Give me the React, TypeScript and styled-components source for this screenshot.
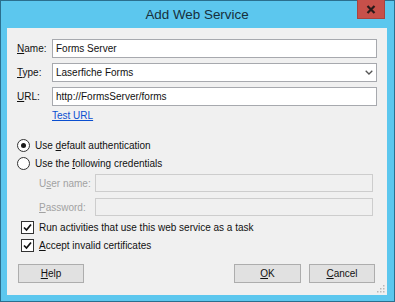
import React from "react";
import styled, { createGlobalStyle } from "styled-components";

const GlobalStyle = createGlobalStyle`
  html, body { margin: 0; padding: 0; background: #5cc7ee; }
  body { font-family: "Liberation Sans", Arial, sans-serif; }
  * { box-sizing: border-box; }
`;

const Window = styled.div`
  width: 395px;
  height: 302px;
  border: 1px solid #2b6f8e;
  background: #5cc7ee;
  display: flex;
  flex-direction: column;
  padding: 0 7px 6px 6px;
`;

const TitleBar = styled.div`
  height: 27px;
  display: grid;
  grid-template-columns: 1fr auto 1fr;
  align-items: start;
`;

const Title = styled.div`
  grid-column: 2;
  font-size: 13.4px;
  line-height: 16px;
  margin-top: 6px;
  color: #17303c;
  white-space: nowrap;
`;

const CloseButton = styled.div`
  grid-column: 3;
  justify-self: end;
  width: 28px;
  height: 19px;
  margin-top: -1px;
  margin-right: 2px;
  background: #c7504a;
  border: 1px solid #a9433e;
  border-top: none;
  display: flex;
  align-items: center;
  justify-content: center;
`;

const Client = styled.div`
  position: relative;
  flex: 1;
  background: #f0f0f0;
  padding: 11px 10px 0 10px;
  display: flex;
  flex-direction: column;
  font-size: 10px;
  color: #111;
`;

const FieldGrid = styled.div`
  display: grid;
  grid-template-columns: 35px 1fr;
  row-gap: 5px;
  align-items: center;
`;

const Label = styled.span<{ $disabled?: boolean }>`
  font-size: 10px;
  color: ${(p) => (p.$disabled ? "#a2a2a2" : "#111")};
  white-space: nowrap;
`;

const Key = styled.span`
  text-decoration: underline;
  text-underline-offset: 1px;
`;

const TextBox = styled.div<{ $disabled?: boolean }>`
  height: 19px;
  border: 1px solid ${(p) => (p.$disabled ? "#cdcdcd" : "#a7a9ae")};
  background: ${(p) => (p.$disabled ? "#f0f0f0" : "#ffffff")};
  padding: 0 3px;
  display: flex;
  align-items: center;
  justify-content: space-between;
  font-size: 10px;
`;

const Link = styled.a`
  margin: 3px 0 0 35px;
  align-self: flex-start;
  line-height: 13px;
  color: #0a4fd0;
  text-decoration: underline;
  font-size: 10px;
`;

const OptionList = styled.div`
  margin-top: 14px;
  display: flex;
  flex-direction: column;
`;

const OptionRow = styled.label<{ $indent?: number }>`
  height: 18px;
  display: flex;
  align-items: center;
  gap: 5px;
  padding-left: ${(p) => p.$indent ?? 0}px;
  white-space: nowrap;
`;

const Radio = styled.span<{ $checked?: boolean }>`
  width: 13px;
  height: 13px;
  border-radius: 50%;
  border: 1px solid #333;
  background: #fff;
  display: flex;
  align-items: center;
  justify-content: center;
  &::after {
    content: "";
    width: 5px;
    height: 5px;
    border-radius: 50%;
    background: ${(p) => (p.$checked ? "#1a1a1a" : "transparent")};
  }
`;

const CheckBox = styled.span`
  width: 13px;
  height: 13px;
  border: 1px solid #333;
  background: #fff;
  display: flex;
  align-items: center;
  justify-content: center;
`;

const CredGrid = styled.div`
  margin: 2px 4px 0 22px;
  display: grid;
  grid-template-columns: 56px 1fr;
  row-gap: 6px;
  align-items: center;
`;

const CredBox = styled(TextBox)`
  height: 18px;
`;

const CheckList = styled.div`
  margin-top: 2px;
  display: flex;
  flex-direction: column;
`;

const ButtonBar = styled.div`
  margin-top: 10px;
  display: flex;
  align-items: center;
  padding: 0 2px 0 1px;
  gap: 8px;
`;

const Spacer = styled.div`
  flex: 1;
`;

const Button = styled.button<{ $width?: number }>`
  width: ${(p) => p.$width ?? 67}px;
  height: 19px;
  background: #e1e1e1;
  border: 1px solid #adadad;
  font-family: "Liberation Sans", Arial, sans-serif;
  font-size: 10px;
  color: #111;
  padding: 0;
  display: flex;
  align-items: center;
  justify-content: center;
`;

const Grip = styled.svg`
  position: absolute;
  right: 2px;
  bottom: 2px;
`;

const Check = () => (
  <svg width="9" height="9" viewBox="0 0 9 9">
    <path d="M1 4.5 L3.5 7 L8 1.5" stroke="#111" strokeWidth="1.7" fill="none" />
  </svg>
);

export default function App() {
  return (
    <>
      <GlobalStyle />
      <Window>
        <TitleBar>
          <Title>Add Web Service</Title>
          <CloseButton>
            <svg width="10" height="9" viewBox="0 0 10 9">
              <path d="M1.5 1 L8.5 8 M8.5 1 L1.5 8" stroke="#2a1a1a" strokeWidth="2.2" />
            </svg>
          </CloseButton>
        </TitleBar>
        <Client>
          <FieldGrid>
            <Label>
              <Key>N</Key>ame:
            </Label>
            <TextBox>Forms Server</TextBox>
            <Label>
              <Key>T</Key>ype:
            </Label>
            <TextBox>
              <span>Laserfiche Forms</span>
              <svg width="8" height="5" viewBox="0 0 8 5">
                <path d="M0.7 0.7 L4 4 L7.3 0.7" stroke="#555" strokeWidth="1.3" fill="none" />
              </svg>
            </TextBox>
            <Label>
              <Key>U</Key>RL:
            </Label>
            <TextBox>http://FormsServer/forms</TextBox>
          </FieldGrid>
          <Link href="#">Test URL</Link>
          <OptionList>
            <OptionRow>
              <Radio $checked />
              <span>
                Use <Key>d</Key>efault authentication
              </span>
            </OptionRow>
            <OptionRow>
              <Radio />
              <span>
                Use the <Key>f</Key>ollowing credentials
              </span>
            </OptionRow>
          </OptionList>
          <CredGrid>
            <Label $disabled>
              U<Key>s</Key>er name:
            </Label>
            <CredBox $disabled />
            <Label $disabled>
              <Key>P</Key>assword:
            </Label>
            <CredBox $disabled />
          </CredGrid>
          <CheckList>
            <OptionRow $indent={4}>
              <CheckBox>
                <Check />
              </CheckBox>
              <span>Run activities that use this web service as a task</span>
            </OptionRow>
            <OptionRow $indent={4}>
              <CheckBox>
                <Check />
              </CheckBox>
              <span>
                <Key>A</Key>ccept invalid certificates
              </span>
            </OptionRow>
          </CheckList>
          <ButtonBar>
            <Button $width={66}>
              <Key>H</Key>elp
            </Button>
            <Spacer />
            <Button>
              <Key>O</Key>K
            </Button>
            <Button $width={66}>
              <Key>C</Key>ancel
            </Button>
          </ButtonBar>
          <Grip width="8" height="8" viewBox="0 0 8 8">
            <rect x="6" y="0" width="1.5" height="1.5" fill="#b8b8b8" />
            <rect x="3" y="3" width="1.5" height="1.5" fill="#b8b8b8" />
            <rect x="6" y="3" width="1.5" height="1.5" fill="#b8b8b8" />
            <rect x="0" y="6" width="1.5" height="1.5" fill="#b8b8b8" />
            <rect x="3" y="6" width="1.5" height="1.5" fill="#b8b8b8" />
            <rect x="6" y="6" width="1.5" height="1.5" fill="#b8b8b8" />
          </Grip>
        </Client>
      </Window>
    </>
  );
}
